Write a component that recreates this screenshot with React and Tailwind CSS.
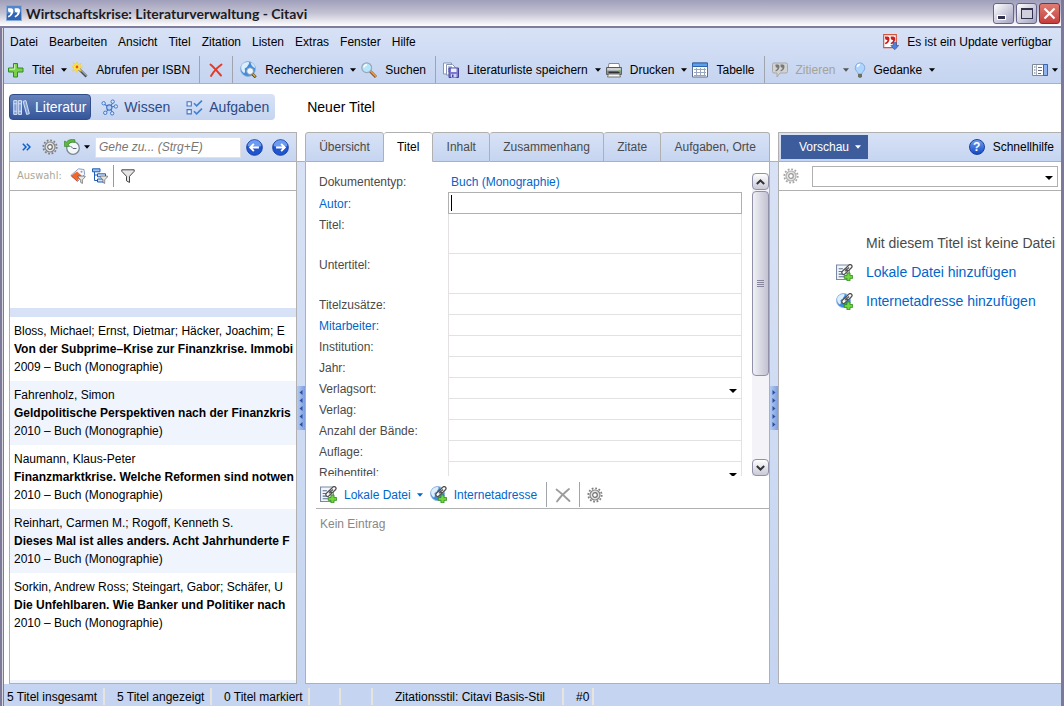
import React from "react";

const Svg = ({ children, s = 16, className = "" }) => (
  <svg viewBox="0 0 16 16" width={s} height={s} className={"shrink-0 " + className} aria-hidden="true">
    {children}
  </svg>
);

const Caret = ({ className = "text-black" }) => (
  <svg viewBox="0 0 6 4" width="6" height="4" className={"shrink-0 " + className} aria-hidden="true">
    <path d="M0 .3h6L3 3.7z" fill="currentColor" />
  </svg>
);

const ComboArrow = () => (
  <svg viewBox="0 0 8 4" width="8" height="4" className="pointer-events-none absolute right-[5px] top-1/2" aria-hidden="true">
    <path d="M0 0h8L4 4z" fill="#000" />
  </svg>
);

const PlusIcon = () => (
  <Svg>
    <path d="M5.5 1.500h4v4.500h5.500v4H9.500v5H5.500v-5H.500V6h5z" fill="#7ad04a" stroke="#2f8f1c" strokeWidth="1" />
    <path d="M6.700 2.500v4.700H1.500" fill="none" stroke="#d6f6bd" strokeWidth="1" />
  </Svg>
);

const WandIcon = () => (
  <Svg>
    <path d="M7 7l7.500 7.500" stroke="#4b4f55" strokeWidth="2.600" />
    <path d="M7.500 6.800l7 7" stroke="#c3c6cc" strokeWidth="1" />
    <path d="M5 0l1.200 3L9.200 1 7.700 4.100l3 1.100-3 1.100L9.200 9.500 5.900 7.600 4.700 10.500l-1-3.100L.5 9.200 2 5.900-.2 4.700l2.700-1L1 .6l2.900 1.700z" fill="#fbe64d" stroke="#f0c62a" strokeWidth=".5" />
    <circle cx="5" cy="5" r="1.400" fill="#e8502a" />
  </Svg>
);

const RedX = () => (
  <Svg>
    <path d="M2.500 2.500c3.500 3 7 7 10.500 11M13.500 2.500C9.500 5.500 5.500 9.500 3 14" fill="none" stroke="#e63a26" strokeWidth="1.900" strokeLinecap="round" />
  </Svg>
);

const GlobeBody = () => (
  <>
    <circle cx="7.500" cy="7.500" r="7" fill="#3f8cde" stroke="#8fb1dc" strokeWidth=".8" />
    <path d="M1.200 5C2.500 2 5 .8 8 1c1.500 1.500-.5 2.500-1 4S4 6.500 4.500 8 5 10 4 11.500C1.800 10.500.6 8 1.200 5z" fill="#dceefa" />
    <path d="M10 1.500c2.500.7 4 2.500 4.300 5-2 0-3.800-2-4.300-5z" fill="#cfe6f8" />
  </>
);

const GlobeSearch = () => (
  <Svg s={17}>
    <GlobeBody />
    <path d="M11.500 12l3.300 3.300" stroke="#3e3a2a" strokeWidth="2.600" />
    <path d="M12 12.200l2.500 2.500" stroke="#e2b13a" strokeWidth="1.400" />
    <circle cx="9.500" cy="9.500" r="3.200" fill="#eef8fd" stroke="#8a97a8" strokeWidth=".9" />
  </Svg>
);

const Magnifier = () => (
  <Svg>
    <path d="M9 9l6 6" stroke="#96572a" strokeWidth="3" />
    <path d="M9.500 9l5.500 5.500" stroke="#e8a25a" strokeWidth="1.200" />
    <circle cx="5.700" cy="5.700" r="4.900" fill="#b5e6fb" stroke="#9aa7b5" strokeWidth="1.200" />
    <path d="M3 5.500a3 3 0 0 1 3-2.800" stroke="#fff" strokeWidth="1.500" fill="none" />
  </Svg>
);

const SaveList = () => (
  <Svg>
    <path d="M.5 1h8v11h-8z" fill="#fff" stroke="#8794b3" />
    <path d="M3.500 2.500h6L12 5v8H3.500z" fill="#fff" stroke="#8794b3" />
    <path d="M5 5h4M5 7h3M5 9h2" stroke="#6f86c7" />
    <path d="M6 6h9.500v9.500H6z" fill="#7d78d0" stroke="#45429a" />
    <path d="M8 6.500h5.500v3.500H8z" fill="#eef0fb" />
    <path d="M8 12h5.500v3.500H8z" fill="#cfd2f2" />
    <path d="M9 12.500h1.500v2.500H9z" fill="#45429a" />
  </Svg>
);

const Printer = () => (
  <Svg>
    <path d="M3 1.500h10l.8 4.500H2.200z" fill="#fff" stroke="#888" />
    <path d="M.6 5.500h14.800v7H.600z" fill="#909396" stroke="#55585b" />
    <path d="M1.200 6h13.600v2.500H1.200z" fill="#cfd1d3" />
    <path d="M2.500 9.500h11v1.800h-11z" fill="#2e3133" />
    <path d="M12.500 9h2" stroke="#55d02c" strokeWidth="1.400" />
    <path d="M2.500 12h11l1 3h-13z" fill="#f3f3f3" stroke="#777" />
  </Svg>
);

const TableIcon = () => (
  <Svg>
    <path d="M.5 1h15v14H.500z" fill="#fff" stroke="#5e6f91" />
    <path d="M.5 1h15v3.500H.500z" fill="#5da0ea" stroke="#2c62ae" />
    <path d="M2 7.500h12M2 10.500h12M2 13.500h12M4.500 6v8.500M8.500 6v8.500M12.500 6v8.500" stroke="#9aa6bb" />
  </Svg>
);

/* Pair of comma-shaped quotation marks used by the product mark. */
const Marks = ({ fill }) => (
  <path d="M2 3.200h3q2.300 0 2.300 2.600 0 4.600-4.800 6.700L1.800 11Q4.600 9.600 5 7.400 2 7.800 2 5.200zM8.700 3.200h3q2.300 0 2.300 2.600 0 4.600-4.800 6.700L8.500 11q2.800-1.400 3.200-3.600-3 .4-3-2.200z" fill={fill} />
);

const AppIcon = () => (
  <Svg>
    <path d="M.5.500h15v15H.500z" fill="#2f63b4" stroke="#86a9d9" />
    <path d="M1 1h14v6L1 9z" fill="#5484c9" />
    <Marks fill="#fff" />
  </Svg>
);

const UpdateIcon = () => (
  <Svg>
    <path d="M.7.700h12.600v13H.700z" fill="#fff" stroke="#d4543a" strokeWidth="1.200" />
    <g transform="translate(.3 -.3) scale(.85)"><Marks fill="#d01c1c" /></g>
    <path d="M10 8.500h3.500v3h2.300L11.700 15.800 7.800 11.500H10z" fill="#4f80dc" stroke="#2c509c" strokeWidth=".6" />
  </Svg>
);

const QuoteGray = () => (
  <Svg>
    <path d="M1.500 1h12.500q1.500 0 1.500 1.500v7q0 1.500-1.500 1.500H8l-3 4v-4H2Q.500 11 .500 9.500v-7Q.500 1 1.500 1z" fill="#d2d2d2" stroke="#a9a9a9" />
    <g transform="translate(2 .2) scale(.75)"><Marks fill="#777" /></g>
  </Svg>
);

const Bulb = () => (
  <svg viewBox="0 0 12 16" width="12" height="16" className="shrink-0" aria-hidden="true">
    <path d="M6 .8a5 5 0 0 1 3.200 8.700c-.7.700-1 1.400-1.200 2.300H4c-.2-.9-.5-1.600-1.200-2.300A5 5 0 0 1 6 .8z" fill="#aed5fd" stroke="#86aee0" />
    <path d="M3.500 5A2.600 2.600 0 0 1 6 2.500" stroke="#fff" strokeWidth="1.500" fill="none" />
    <path d="M4 12h4v2.500L7 15.700H5L4 14.500z" fill="#6b6f5e" />
  </svg>
);

const LayoutIcon = () => (
  <Svg>
    <path d="M.5 2.500h15v11H.500z" fill="#fff" stroke="#7c8797" />
    <path d="M2 5h1.500M2 8h1.500M2 11h1.500M6 5.500h4M6 8.500h4M6 11.500h3" stroke="#667086" />
    <path d="M4.500 3v10" stroke="#a9b2c0" />
    <path d="M11.500 2.500h4v11h-4z" fill="#8fb4f0" stroke="#3a66b0" />
  </Svg>
);

const Gear = ({ light }) => (
  <Svg>
    <circle cx="8" cy="8" r="6.700" fill="none" stroke={light ? "#a5a5a5" : "#808080"} strokeWidth="1.800" strokeDasharray="1.800 1.708" />
    <circle cx="8" cy="8" r="5" fill="#e2e2e2" stroke={light ? "#b0b0b0" : "#858585"} strokeWidth="1.200" />
    <circle cx="8" cy="8" r="2.300" fill="#fff" stroke={light ? "#999" : "#6e6e6e"} strokeWidth="1.200" />
  </Svg>
);

const ClockIcon = () => (
  <Svg>
    <circle cx="9" cy="9" r="6.300" fill="#f4f7fa" stroke="#7a8794" strokeWidth="1.300" />
    <path d="M9 9.500h3.500M9 9.500L6.500 7" fill="none" stroke="#5a6672" strokeWidth="1" />
    <path d="M11 .8C7-.3 4 1 2.500 3L.5 2v5.500h5.300L4.300 5.500C5.500 3.500 8 2.700 10.500 3.500z" fill="#5cb93c" stroke="#2f8122" strokeWidth=".6" />
  </Svg>
);

const RoundArrow = ({ right }) => (
  <Svg s={17}>
    <circle cx="8" cy="8" r="7.400" fill="#1f55cf" stroke="#11389b" strokeWidth=".8" />
    <path d="M1.500 6.500a6.500 5.500 0 0 1 13 0q-6.500 2.500-13 0z" fill="#6c9bf2" />
    <path d={right ? "M3.800 8h8M8.600 4.600L12 8l-3.400 3.400" : "M12.200 8h-8M7.400 4.600L4 8l3.400 3.400"} fill="none" stroke="#fff" strokeWidth="1.800" />
  </Svg>
);

const FunnelPath = () => <path d="M.8 1h12.400v1.500L8.500 7.500v6.200L5.500 12V7.500L.8 2.500z" fill="#e6e6e6" stroke="#444" strokeWidth="1" />;

const Funnel = () => (
  <Svg><g transform="translate(1 .8)"><FunnelPath /></g></Svg>
);

const TagFilter = () => (
  <Svg>
    <path d="M8.500.800l5.500.700.700 5L8 13 .800 7.500z" fill="#f4f7fb" stroke="#8c9fc0" />
    <path d="M1 7.700L7 3.500l4.500 4L7.500 12.500z" fill="#f4652a" />
    <path d="M1.500 8l6 5.500" stroke="#b9462a" />
    <circle cx="11.500" cy="3.800" r="1" fill="#8c9fc0" />
    <g transform="translate(7.500 7.500) scale(.58)"><FunnelPath /></g>
  </Svg>
);

const TreeFilter = () => (
  <Svg>
    <path d="M.5.800h7.500v3H.500z" fill="#9cc3f2" stroke="#1f5db3" />
    <path d="M2.500 4v8.500H6M2.500 7h3" fill="none" stroke="#1f5db3" />
    <path d="M5.500 5.800h8v3h-8zM5.500 11h6v3h-6z" fill="#cfe2fa" stroke="#1f5db3" />
    <g transform="translate(7.800 7.500) scale(.58)"><FunnelPath /></g>
  </Svg>
);

/* Two chain links with a green plus in the corner. */
const ClipPlus = () => (
  <>
    <rect x="-3.300" y="-1.700" width="6.600" height="3.400" rx="1.700" transform="translate(8.300 7) rotate(-45)" fill="#fff" stroke="#505050" strokeWidth="1.200" />
    <rect x="-3.300" y="-1.700" width="6.600" height="3.400" rx="1.700" transform="translate(12.200 3.400) rotate(-45)" fill="#fff" stroke="#505050" strokeWidth="1.200" />
    <path d="M8.300 7l4-3.700" stroke="#505050" strokeWidth="1.100" />
    <path d="M10.300 8.400h2.900v2.500h2.500v2.600h-2.500v2.300h-2.900v-2.300H7.800v-2.600h2.500z" fill="#72d83c" stroke="#2a8a18" strokeWidth=".8" />
  </>
);

const FileLink = () => (
  <Svg s={17}>
    <path d="M.5 1h12v13.500H.500z" fill="#f2f5fa" stroke="#7a8aa5" />
    <path d="M2.500 4.500h4M2.500 7h5M2.500 9.500h4M2.500 12h5" stroke="#5c6f94" />
    <ClipPlus />
  </Svg>
);

const WebLink = () => (
  <Svg s={17}>
    <g transform="scale(.95)"><GlobeBody /></g>
    <ClipPlus />
  </Svg>
);

const Books = () => (
  <Svg s={17}>
    <path d="M.7 1.500h3v13h-3zM5 1.500h3v13H5zM9.500 2.200l2.600-.700 3.300 12.300-2.600.7z" fill="#7f9fd6" stroke="#dbe6f8" strokeWidth=".9" />
    <path d="M.7 4.500h3M5 4.500h3M.7 11.500h3M5 11.500h3" stroke="#dbe6f8" strokeWidth=".8" />
  </Svg>
);

const Network = () => (
  <Svg s={17}>
    <path d="M2.500 4.500L8 8l3.500-5M8 8l6-1.500M8 8l-3.500 5M8 8l3 5" stroke="#3f74c9" fill="none" />
    {[[2.500, 4], [11, 2.500], [14, 7], [4, 13], [10.500, 13.500]].map(([x, y]) => (
      <circle key={x} cx={x} cy={y} r="1.600" fill="#d9e6fa" stroke="#3f74c9" strokeWidth=".9" />
    ))}
    <circle cx="7.800" cy="8" r="2.500" fill="#b4cef5" stroke="#3f74c9" />
  </Svg>
);

const Tasks = () => (
  <Svg s={17}>
    <path d="M1 2.500h4v4H1zM1 10h4v4H1z" fill="#e7f0fd" stroke="#3f74c9" />
    <path d="M7.500 4l2.500 2.500 5-5M7.500 11.500L10 14l5-5" fill="none" stroke="#3f80d6" strokeWidth="1.500" />
  </Svg>
);

const HelpIcon = () => (
  <span className="flex size-4 shrink-0 items-center justify-center rounded-full border border-[#1a3f9e] bg-gradient-to-b from-[#6f9cf0] to-[#1548c4] text-xs font-bold text-white" aria-hidden="true">?</span>
);

const GrayX = () => (
  <Svg>
    <path d="M1.500 2.500c4 3 9 7.500 13 11.500M14 2C9 6 5 10 2 14.500" fill="none" stroke="#9c9c9c" strokeWidth="1.800" strokeLinecap="round" />
  </Svg>
);

const Sep = () => <span className="mx-[7px] w-px self-stretch bg-[#a0a4ac]" />;

const Tool = ({ icon, label, caret, disabled }) => (
  <button disabled={disabled} className={"flex shrink-0 items-center whitespace-nowrap " + (disabled ? "text-[#a5a396]" : "text-black")}>
    {icon}
    <span className="ml-2 pr-[2px]">{label}</span>
    {caret && <Caret className={"mx-[5px] " + (disabled ? "text-[#555]" : "text-black")} />}
  </button>
);

const menus = ["Datei", "Bearbeiten", "Ansicht", "Titel", "Zitation", "Listen", "Extras", "Fenster", "Hilfe"];

const entries = [
  ["Bloss, Michael; Ernst, Dietmar; Häcker, Joachim; E", "Von der Subprime–Krise zur Finanzkrise. Immobi", "2009 – Buch (Monographie)"],
  ["Fahrenholz, Simon", "Geldpolitische Perspektiven nach der Finanzkris", "2010 – Buch (Monographie)"],
  ["Naumann, Klaus-Peter", "Finanzmarktkrise. Welche Reformen sind notwen", "2010 – Buch (Monographie)"],
  ["Reinhart, Carmen M.; Rogoff, Kenneth S.", "Dieses Mal ist alles anders. Acht Jahrhunderte F", "2010 – Buch (Monographie)"],
  ["Sorkin, Andrew Ross; Steingart, Gabor; Schäfer, U", "Die Unfehlbaren. Wie Banker und Politiker nach", "2010 – Buch (Monographie)"],
];

const fields = [
  { label: "Titel:", tall: true },
  { label: "Untertitel:", tall: true },
  { label: "Titelzusätze:" },
  { label: "Mitarbeiter:", link: true },
  { label: "Institution:" },
  { label: "Jahr:" },
  { label: "Verlagsort:", combo: true },
  { label: "Verlag:" },
  { label: "Anzahl der Bände:" },
  { label: "Auflage:" },
  { label: "Reihentitel:", combo: true },
];

const tabs = ["Übersicht", "Titel", "Inhalt", "Zusammenhang", "Zitate", "Aufgaben, Orte"];

function Field({ label, tall, link, combo }) {
  const id = "f-" + label.replace(/\W/g, "");
  const box = "block h-full w-full appearance-none resize-none border-x border-b border-[#e3e1e1] bg-white px-1 outline-none";
  return (
    <div className={"flex shrink-0 " + (tall ? "h-10" : "h-[21px]")}>
      <label htmlFor={id} className={"w-[129px] shrink-0 pt-[2px] " + (link ? "text-[#0066cc]" : "text-[#4a4a4a]")}>{label}</label>
      <div className="relative flex-1">
        {tall ? <textarea id={id} className={box} /> : combo ? <select id={id} className={box}><option></option></select> : <input id={id} className={box} />}
        {combo && <ComboArrow />}
      </div>
    </div>
  );
}

function Splitter({ right }) {
  return (
    <div className="flex w-2 shrink-0 flex-col">
      <div className="h-[30px] border-b border-[#b0b0b0]" />
      <div className="flex flex-1 flex-col bg-gradient-to-b from-[#d8e2f6] to-[#c5d4f0] pt-[224px]">
        <div className="flex h-11 flex-col items-center justify-center gap-[3px] bg-gradient-to-r from-[#b4caf2] to-[#7c9fe0]">
          {[0, 1, 2, 3, 4].map((i) => (
            <svg key={i} viewBox="0 0 4 5" width="4" height="5" aria-hidden="true">
              <path d={right ? "M.5 0v5L3.500 2.500z" : "M3.500 0v5L.5 2.500z"} fill="#2c4f9e" />
            </svg>
          ))}
        </div>
      </div>
    </div>
  );
}

const bar = "bg-gradient-to-b from-[#d8e2f6] to-[#c5d4f0]";

function ScrollButton({ down }) {
  return (
    <button aria-label={down ? "Nach unten" : "Nach oben"} className="flex h-[17px] w-full shrink-0 items-center justify-center rounded-sm border border-[#9090a8] bg-gradient-to-b from-white to-[#c9c9d8]">
      <svg viewBox="0 0 9 6" width="9" height="6" aria-hidden="true">
        <path d={down ? "M.8 1l3.700 3.500L8.200 1" : "M.8 5l3.700-3.500L8.200 5"} fill="none" stroke="#333" strokeWidth="2" />
      </svg>
    </button>
  );
}

const Cell = ({ children, className }) => (
  <div className={"flex h-[17px] shrink-0 items-center whitespace-nowrap border-r-2 border-[#e6e4dc] " + className}>{children}</div>
);

export default function App() {
  return (
    <div className="flex min-h-screen flex-col border-r-[3px] border-[#7d7a99] bg-white font-['Liberation_Sans',Arial,sans-serif] text-xs leading-[18px] text-black">
      <header className="flex h-7 items-center border-b-2 border-[#807d9c] bg-gradient-to-b from-[#a09fbb] via-[#c3c2d3] to-white pl-[6px] pr-px">
        <AppIcon />
        <h1 className="ml-1 flex-1 pt-[2px] font-['Lato','Open_Sans',sans-serif] text-sm font-bold text-[#1c1c24]">Wirtschaftskrise: Literaturverwaltung - Citavi</h1>
        <div className="flex gap-[2px]">
          <button aria-label="Minimieren" className="flex h-[21px] w-[21px] items-end justify-start rounded-[3px] border border-[#66648a] bg-gradient-to-br from-white to-[#a3a2c0] p-[3px]">
            <span className="h-[5px] w-[9px] border border-white bg-[#33324e]" />
          </button>
          <button aria-label="Maximieren" className="flex h-[21px] w-[21px] items-center justify-center rounded-[3px] border border-[#66648a] bg-gradient-to-br from-white to-[#a3a2c0]">
            <span className="h-[11px] w-3 border border-t-2 border-[#33324e] bg-[#cfcfde]" />
          </button>
          <button aria-label="Schließen" className="flex h-[21px] w-[21px] items-center justify-center rounded-[3px] border border-[#8c2c30] bg-gradient-to-b from-[#dd7d74] to-[#c43c3c]">
            <svg viewBox="0 0 13 13" width="13" height="13" aria-hidden="true"><path d="M1.500 1.500l10 10M11.500 1.500l-10 10" stroke="#fff" strokeWidth="2.200" /></svg>
          </button>
        </div>
      </header>

      <div className="flex flex-1">
        <div className="w-1 shrink-0 border-l-2 border-r border-[#7d7a99] bg-[#d8d7e2]" />
        <div className="flex min-w-0 flex-1 flex-col">
          <div className={"border-b border-[#b0b0b0] " + bar}>
            <nav className="flex h-7 items-center gap-[10px] pl-[6px] pr-[9px]">
              {menus.map((m) => <button key={m} className="pr-px">{m}</button>)}
              <button className="ml-auto flex items-center gap-2 whitespace-nowrap"><UpdateIcon />Es ist ein Update verfügbar</button>
            </nav>
            <div className="flex h-[27px] items-stretch pl-1">
              <Tool icon={<PlusIcon />} label="Titel" caret />
              <Tool icon={<WandIcon />} label="Abrufen per ISBN" />
              <Sep />
              <button aria-label="Löschen" className="px-px"><RedX /></button>
              <Sep />
              <Tool icon={<GlobeSearch />} label="Recherchieren" caret />
              <Tool icon={<Magnifier />} label="Suchen" />
              <Sep />
              <Tool icon={<SaveList />} label="Literaturliste speichern" caret />
              <Tool icon={<Printer />} label="Drucken" caret />
              <Tool icon={<TableIcon />} label="Tabelle" />
              <Sep />
              <Tool icon={<QuoteGray />} label="Zitieren" caret disabled />
              <Tool icon={<Bulb />} label="Gedanke" caret />
              <button aria-label="Fensterlayout" className="ml-auto flex items-center gap-1 pr-[3px]"><LayoutIcon /><Caret /></button>
            </div>
          </div>

          <div className="flex h-12 items-center pb-[2px] pl-[5px] text-sm">
            <div className={"flex h-[26px] items-stretch rounded-sm text-[#2c4a86] " + bar}>
              <button className="flex items-center gap-[5px] rounded-sm border border-[#2f4d88] bg-gradient-to-b from-[#6683ba] to-[#35559a] pl-[3px] pr-1 text-white"><Books />Literatur</button>
              <button className="flex items-center gap-[6px] px-[10px]"><Network />Wissen</button>
              <button className="flex items-center gap-[6px] px-[6px]"><Tasks />Aufgaben</button>
            </div>
            <h2 className="ml-8">Neuer Titel</h2>
          </div>

          <main className="flex flex-1">
            <section className="ml-[5px] flex w-[288px] shrink-0 flex-col border border-[#b0b0b0] bg-white">
              <div className={"flex h-[29px] items-center border-b border-[#b0b0b0] pl-3 " + bar}>
                <button aria-label="Erweitern">
                  <svg viewBox="0 0 9 8" width="9" height="8" aria-hidden="true"><path d="M.8.800L4 4 .8 7.200M4.800.800L8 4 4.800 7.200" fill="none" stroke="#0a62d0" strokeWidth="1.500" /></svg>
                </button>
                <button aria-label="Optionen" className="ml-[11px]"><Gear /></button>
                <button aria-label="Verlauf" className="ml-[6px] flex items-center gap-1"><ClockIcon /><Caret /></button>
                <input aria-label="Gehe zu" placeholder="Gehe zu... (Strg+E)" className="ml-[5px] h-[21px] w-[146px] border border-[#e3e1e1] bg-white px-[3px] italic outline-none placeholder:text-[#777]" />
                <button aria-label="Zurück" className="ml-[5px]"><RoundArrow /></button>
                <button aria-label="Vor" className="ml-[9px]"><RoundArrow right /></button>
              </div>
              <div className="flex h-[29px] items-center border-b border-[#b0b0b0] pl-[7px]">
                <span className="w-[53px] font-['DejaVu_Sans_Condensed','DejaVu_Sans',sans-serif] text-[11px] text-[#aca899]">Auswahl:</span>
                <button aria-label="Schlagwortfilter"><TagFilter /></button>
                <button aria-label="Kategoriefilter" className="ml-[6px]"><TreeFilter /></button>
                <span className="ml-[5px] mr-[6px] h-[22px] w-px bg-[#999]" />
                <button aria-label="Filter"><Funnel /></button>
              </div>
              <div className="h-[117px]" />
              <div className="h-[9px] bg-[#d8e2f6]" />
              <ul>
                {entries.map(([a, t, y], i) => (
                  <li key={a} className={"h-16 overflow-hidden whitespace-nowrap pl-1 pt-[5px] " + (i % 2 ? "bg-[#f0f4fd]" : "bg-white")}>
                    <p>{a}</p>
                    <p className="font-bold">{t}</p>
                    <p>{y}</p>
                  </li>
                ))}
              </ul>
              <div className="mt-auto h-[3px] bg-[#f0f4fd]" />
            </section>

            <Splitter />

            <section className="flex min-w-0 flex-1 flex-col">
              <div className="flex h-[30px] shrink-0" role="tablist">
                {tabs.map((t, i) => (
                  <button key={t} role="tab" aria-selected={i === 1}
                    className={"flex-auto whitespace-nowrap rounded-t-[3px] border-y px-3 " + (i === 1 ? "border-t-[#b0b0b0] border-b-white bg-white text-black" : "border-x border-[#b0b0b0] text-[#4a4a4a] " + bar) + (i > 2 ? " border-l-0" : "")}>
                    {t}
                  </button>
                ))}
              </div>
              <div className="flex flex-1 flex-col border-x border-b border-[#b0b0b0] bg-white">
                <div className="flex h-[314px] pl-[13px] pt-[9px]">
                  <form className="flex h-[305px] flex-1 flex-col overflow-hidden">
                    <div className="flex h-[21px] shrink-0 pt-[2px]">
                      <span className="w-[132px] text-[#4a4a4a]">Dokumententyp:</span>
                      <a href="#typ" className="text-[#0066cc]">Buch (Monographie)</a>
                    </div>
                    <div className="flex h-[22px] shrink-0">
                      <label htmlFor="autor" className="w-[129px] shrink-0 pt-[3px] text-[#0066cc]">Autor:</label>
                      <div className="relative flex-1">
                        <input id="autor" className="block h-full w-full border border-[#b0b0b0] bg-white px-1 outline-none" />
                        <span className="absolute left-[3px] top-[3px] h-4 w-px bg-black" />
                      </div>
                    </div>
                    {fields.map((f) => <Field key={f.label} {...f} />)}
                  </form>
                  <div className="ml-[10px] mt-[2px] flex w-[17px] flex-col bg-[#f3f3f8]">
                    <ScrollButton />
                    <div className="mt-px flex h-[185px] flex-col items-center justify-center gap-px rounded-sm border border-[#9090a8] bg-gradient-to-r from-[#f0f0f6] to-[#c2c2d2]">
                      {[0, 1, 2, 3].map((i) => <span key={i} className="h-px w-[7px] bg-[#85859c]" />)}
                    </div>
                    <div className="flex-1" />
                    <ScrollButton down />
                  </div>
                </div>
                <div className="ml-[10px] flex h-[33px] items-stretch border-b border-[#b0b0b0] pb-px pl-1 pt-[6px] text-[#0066cc]">
                  <button className="flex items-center"><FileLink /><span className="ml-[7px] pr-[2px]">Lokale Datei</span><Caret className="ml-1 mr-[7px] text-[#0066cc]" /></button>
                  <button className="flex items-center gap-[7px] pr-[2px]"><WebLink />Internetadresse</button>
                  <Sep />
                  <button aria-label="Entfernen" className="px-px"><GrayX /></button>
                  <Sep />
                  <button aria-label="Einstellungen"><Gear /></button>
                </div>
                <p className="ml-[14px] mt-[6px] text-[#888]">Kein Eintrag</p>
              </div>
            </section>

            <Splitter right />

            <section className="flex w-[283px] shrink-0 flex-col border border-r-0 border-[#b0b0b0] bg-white">
              <div className={"flex h-[29px] items-center border-b border-[#b0b0b0] pl-[2px] pr-[7px] " + bar}>
                <button className="flex h-6 w-[87px] items-center justify-end gap-[6px] bg-[#3c5c9c] pr-[7px] text-white">Vorschau<Caret className="text-white" /></button>
                <button className="ml-auto flex items-center gap-2"><HelpIcon />Schnellhilfe</button>
              </div>
              <div className="flex h-[29px] items-center border-b border-[#b0b0b0] pl-1 pr-[3px]">
                <button aria-label="Vorschauoptionen"><Gear light /></button>
                <div className="relative ml-[13px] h-[21px] flex-1">
                  <select aria-label="Datei" className="block h-full w-full appearance-none border border-[#b0b0b0] bg-white px-1"><option></option></select>
                  <ComboArrow />
                </div>
              </div>
              <div className="flex flex-col items-start gap-[11px] overflow-hidden whitespace-nowrap pl-[57px] pt-[43px] text-sm leading-[18px]">
                <p className="pl-[30px] text-[#4a4a4a]">Mit diesem Titel ist keine Datei</p>
                <a href="#datei" className="flex items-center gap-[13px] text-[#0066cc]"><FileLink />Lokale Datei hinzufügen</a>
                <a href="#web" className="flex items-center gap-[13px] text-[#0066cc]"><WebLink />Internetadresse hinzufügen</a>
              </div>
            </section>
          </main>

          <footer className="flex h-[22px] items-end bg-[#c5d4f0] pb-px">
            <Cell className="w-[101px] pl-[3px]">5 Titel insgesamt</Cell>
            <Cell className="w-[107px] pl-3">5 Titel angezeigt</Cell>
            <Cell className="w-[98px] pl-3">0 Titel markiert</Cell>
            <Cell className="w-[31px]" />
            <Cell className="w-8" />
            <Cell className="w-[191px] pl-[22px]">Zitationsstil: Citavi Basis-Stil</Cell>
            <Cell className="w-[30px] pl-3">#0</Cell>
          </footer>
        </div>
      </div>
    </div>
  );
}
